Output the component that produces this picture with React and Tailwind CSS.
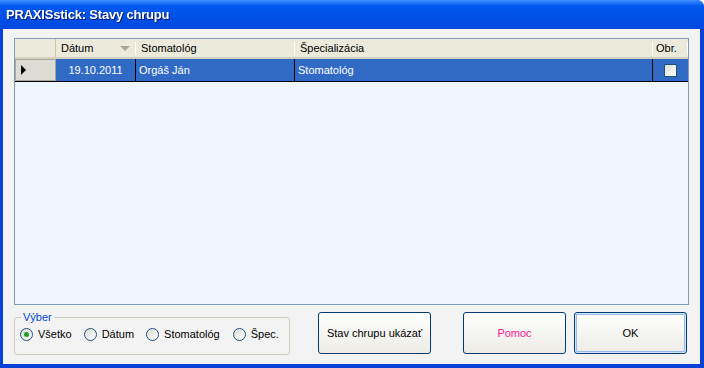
import React from "react";

const font = { fontFamily: '"Liberation Sans", Arial, sans-serif' };

const Radio = ({ checked, label, className = "" }) => (
  <label className={"flex items-center gap-[5px] " + className}>
    <span className="w-[13px] h-[13px] rounded-full border border-[#1c5180] bg-gradient-to-br from-[#dcdcd5] to-[#ffffff] flex items-center justify-center">
      {checked && <span className="w-[5px] h-[5px] rounded-full bg-[#21a121]" />}
    </span>
    <span className="text-[11px] text-black">{label}</span>
  </label>
);

const Button = ({ children, className = "", def }) => (
  <button
    className={
      "h-[42px] rounded-[3px] border border-[#003c74] bg-gradient-to-b from-[#ffffff] to-[#ecebe6] text-[11px] " +
      (def ? "shadow-[inset_0_0_0_1px_#cee7ff,inset_0_0_0_2px_#98b8ea] " : "") +
      className
    }
  >
    {children}
  </button>
);

const HeadSep = () => <span className="w-[1px] h-[13px] bg-[#c7c5b2] border-r border-white" />;

export default function App() {
  return (
    <div className="w-[704px] h-[368px] flex flex-col bg-[#0842d6] rounded-tr-[7px] overflow-hidden" style={font}>
      {/* title bar */}
      <div className="h-[29px] shrink-0 flex items-center pl-[6px] bg-gradient-to-b from-[#3d8fff] via-[#0058ee] via-20% to-[#0048e0]">
        <span className="text-white font-bold text-[13px] tracking-[-0.2px] drop-shadow-[1px_1px_0_#0a1a70]">
          PRAXISstick: Stavy chrupu
        </span>
      </div>

      <div className="flex-1 flex flex-col ml-[3px] mr-[4px] mb-[4px] bg-[#f3f3f3]">
        {/* grid */}
        <div className="ml-[11px] mt-[9px] w-[675px] h-[267px] border border-[#7f9db9] bg-[#f0f6fd] flex flex-col">
          <div className="h-[20px] flex bg-[#ebeadb] border-b-[2px] border-[#d6d2c2] text-[11px] text-black">
            <div className="w-[41px] border-r border-[#c7c5b2]" />
            <div className="w-[80px] flex items-center pl-[5px]">
              <span className="flex-1">Dátum</span>
              <span className="w-0 h-0 border-x-[5px] border-x-transparent border-t-[5px] border-t-[#aca899] mr-[5px]" />
              <HeadSep />
            </div>
            <div className="w-[159px] flex items-center pl-[5px]">
              <span className="flex-1">Stomatológ</span>
              <HeadSep />
            </div>
            <div className="w-[358px] flex items-center pl-[5px]">
              <span className="flex-1">Špecializácia</span>
              <HeadSep />
            </div>
            <div className="flex-1 flex items-center pl-[3px]">
              <span className="flex-1">Obr.</span>
              <HeadSep />
            </div>
          </div>

          <div className="h-[23px] flex border-b border-black text-[11px] text-white">
            <div className="w-[41px] bg-[#dcdcd5] border border-[#aca899] flex items-center pl-[5px]">
              <span className="w-0 h-0 border-y-[5px] border-y-transparent border-l-[5px] border-l-black" />
            </div>
            <div className="w-[80px] bg-[#316ac5] border-r border-black flex items-center justify-center">19.10.2011</div>
            <div className="w-[159px] bg-[#316ac5] border-r border-black flex items-center pl-[3px]">Orgáš Ján</div>
            <div className="w-[358px] bg-[#316ac5] border-r border-black flex items-center pl-[3px]">Stomatológ</div>
            <div className="flex-1 bg-[#316ac5] flex items-center justify-center">
              <span className="w-[13px] h-[13px] border border-[#1c5180] bg-gradient-to-br from-[#dcdcd5] to-[#ffffff]" />
            </div>
          </div>
        </div>

        {/* bottom row */}
        <div className="flex items-start mt-[7px]">
          <fieldset className="ml-[11px] mt-[-1px] w-[276px] h-[44px] border border-[#d0d0bf] rounded-[3px] px-[5px] pb-[6px]">
            <legend className="text-[11px] text-[#0046d5] px-[2px] ml-[1px] leading-[12px]">Výber</legend>
            <div className="flex items-center mt-[3px]">
              <Radio checked label="Všetko" />
              <Radio label="Dátum" className="ml-[12px]" />
              <Radio label="Stomatológ" className="ml-[12px]" />
              <Radio label="Špec." className="ml-[13px]" />
            </div>
          </fieldset>
          <Button className="ml-[28px] w-[113px]">Stav chrupu ukázať</Button>
          <Button className="ml-[32px] w-[103px] text-[#ff1493]">Pomoc</Button>
          <Button def className="ml-[8px] w-[113px]">OK</Button>
        </div>
      </div>
    </div>
  );
}
